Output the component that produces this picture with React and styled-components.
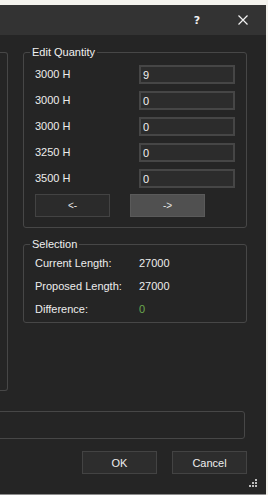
import React, { useState } from "react";
import styled, { createGlobalStyle } from "styled-components";

const GlobalStyle = createGlobalStyle`
  html, body {
    margin: 0;
    padding: 0;
    background: #f4f3ee;
    overflow: hidden;
  }
  body {
    font-family: "Liberation Sans", Arial, sans-serif;
    font-size: 11px;
  }
`;

const Window = styled.div`
  margin-top: 5px;
  width: 266px;
  height: 489px;
  background: #252525;
  color: #ededed;
  display: flex;
  flex-direction: column;
  overflow: hidden;
  border-bottom: 1px solid #8c8c8c;
`;

const TitleBar = styled.div`
  height: 30px;
  flex: none;
  background: #333333;
  display: flex;
  align-items: center;
  justify-content: flex-end;
`;

const TitleButton = styled.div`
  width: 46px;
  height: 30px;
  display: flex;
  align-items: center;
  justify-content: center;
  color: #f2f2f2;
  font-family: "DejaVu Sans", sans-serif;
  font-weight: bold;
  font-size: 11px;
`;

const Body = styled.div`
  flex: 1;
  display: flex;
  flex-direction: column;
  padding-top: 11px;
`;

const MainRow = styled.div`
  display: flex;
  align-items: flex-start;
  gap: 15px;
`;

const SidePanel = styled.div`
  margin-top: 6px;
  width: 7px;
  height: 337px;
  border: 1px solid #474747;
  border-left: none;
  border-radius: 0 3px 3px 0;
`;

const Column = styled.div`
  width: 224px;
  display: flex;
  flex-direction: column;
  gap: 10px;
`;

const Group = styled.fieldset`
  margin: 0;
  padding: 0 10px ${(p) => p.$bottom}px 11px;
  border: 1px solid #474747;
  border-radius: 3px;
  min-width: 0;
`;

const Legend = styled.legend`
  margin-left: -5px;
  padding: 0 2px;
  line-height: 13px;
  color: #f0f0f0;
`;

const QtyGrid = styled.div`
  margin-top: 6px;
  display: grid;
  grid-template-columns: 104px 96px;
  grid-auto-rows: 19px;
  row-gap: 7px;
  align-items: center;
`;

const Label = styled.span`
  line-height: 13px;
  white-space: nowrap;
`;

const QtyInput = styled.input`
  box-sizing: border-box;
  width: 96px;
  height: 19px;
  margin: 0;
  padding: 0 2px;
  border: 2px solid #464646;
  background: #2c2c2c;
  color: #f0f0f0;
  font-family: "Liberation Sans", Arial, sans-serif;
  font-size: 11px;
  outline: none;
`;

const NavRow = styled.div`
  margin-top: 6px;
  display: flex;
  gap: 20px;
`;

const NavButton = styled.button`
  box-sizing: border-box;
  width: 75px;
  height: 23px;
  margin: 0;
  padding: 0;
  border: 1px solid ${(p) => (p.$active ? "#5a5a5a" : "#434343")};
  background: ${(p) => (p.$active ? "#505050" : "#2b2b2b")};
  color: #e6e6e6;
  font-family: "Liberation Sans", Arial, sans-serif;
  font-size: 10px;
`;

const InfoGrid = styled.div`
  margin-top: 6px;
  display: grid;
  grid-template-columns: 104px 1fr;
  row-gap: 10px;
`;

const Value = styled.span`
  line-height: 13px;
  color: ${(p) => p.$color || "#ededed"};
`;

const StatusBox = styled.div`
  margin: 20px 0 0 -5px;
  width: 250px;
  height: 28px;
  box-sizing: border-box;
  border: 1px solid #474747;
  border-radius: 3px;
`;

const ButtonRow = styled.div`
  margin-top: 12px;
  width: 247px;
  display: flex;
  justify-content: flex-end;
  gap: 15px;
`;

const DialogButton = styled.button`
  box-sizing: border-box;
  width: 75px;
  height: 23px;
  margin: 0;
  padding: 0;
  border: 1px solid #434343;
  background: #2d2d2d;
  color: #ededed;
  font-family: "Liberation Sans", Arial, sans-serif;
  font-size: 11px;
`;

const GripRow = styled.div`
  margin-top: 5px;
  width: 257px;
  display: flex;
  justify-content: flex-end;
`;

function Grip() {
  const dots = [
    [6, 0],
    [3, 3],
    [6, 3],
    [0, 6],
    [3, 6],
    [6, 6],
  ];
  return (
    <svg width="8" height="8" viewBox="0 0 8 8">
      {dots.map(([x, y]) => (
        <rect key={`${x}-${y}`} x={x} y={y} width="2" height="2" fill="#bdbdbd" />
      ))}
    </svg>
  );
}

const rows = [
  { label: "3000 H", value: "9" },
  { label: "3000 H", value: "0" },
  { label: "3000 H", value: "0" },
  { label: "3250 H", value: "0" },
  { label: "3500 H", value: "0" },
];

export default function App() {
  const [values, setValues] = useState(rows.map((r) => r.value));

  return (
    <>
      <GlobalStyle />
      <Window>
        <TitleBar>
          <TitleButton>?</TitleButton>
          <TitleButton>
            <svg width="10" height="10" viewBox="0 0 10 10">
              <path d="M0.5 0.5 L9.5 9.5 M9.5 0.5 L0.5 9.5" stroke="#f2f2f2" strokeWidth="1.2" />
            </svg>
          </TitleButton>
        </TitleBar>
        <Body>
          <MainRow>
            <SidePanel />
            <Column>
              <Group $bottom={10}>
                <Legend>Edit Quantity</Legend>
                <QtyGrid>
                  {rows.map((r, i) => (
                    <React.Fragment key={i}>
                      <Label>{r.label}</Label>
                      <QtyInput
                        value={values[i]}
                        onChange={(e) => {
                          const next = [...values];
                          next[i] = e.target.value;
                          setValues(next);
                        }}
                      />
                    </React.Fragment>
                  ))}
                </QtyGrid>
                <NavRow>
                  <NavButton>&lt;-</NavButton>
                  <NavButton $active>-&gt;</NavButton>
                </NavRow>
              </Group>
              <Group $bottom={6}>
                <Legend>Selection</Legend>
                <InfoGrid>
                  <Label>Current Length:</Label>
                  <Value>27000</Value>
                  <Label>Proposed Length:</Label>
                  <Value>27000</Value>
                  <Label>Difference:</Label>
                  <Value $color="#6aa84f">0</Value>
                </InfoGrid>
              </Group>
            </Column>
          </MainRow>
          <StatusBox />
          <ButtonRow>
            <DialogButton>OK</DialogButton>
            <DialogButton>Cancel</DialogButton>
          </ButtonRow>
          <GripRow>
            <Grip />
          </GripRow>
        </Body>
      </Window>
    </>
  );
}
